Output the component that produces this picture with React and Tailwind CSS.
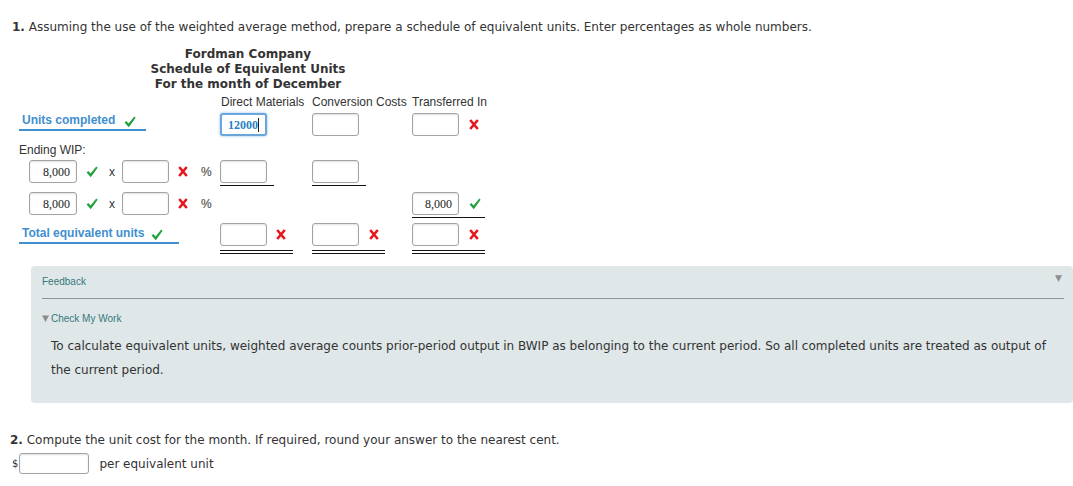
import React from 'react';

const body = { fontFamily: '"DejaVu Sans", Verdana, sans-serif' };
const arial = { fontFamily: '"Liberation Sans", Arial, sans-serif' };
const serif = { fontFamily: '"Liberation Serif", "Times New Roman", serif' };

const Check = ({ className = '' }) => (
  <svg width="12" height="12" viewBox="0 0 12 12" className={className}>
    <path d="M0.6 6.6 L2.3 5.1 L4.6 7.6 L10.3 0.6 L11.6 1.8 L4.8 11.2 Z" fill="#1fa03a" />
  </svg>
);

const Cross = ({ className = '' }) => (
  <svg width="10" height="11" viewBox="0 0 10 11" className={className}>
    <path d="M1.2 1 L8.8 10 M8.8 1 L1.2 10" stroke="#e8151c" strokeWidth="2.6" />
  </svg>
);

const Caret = ({ className = '' }) => (
  <svg width="7" height="7" viewBox="0 0 7 7" className={className}>
    <path d="M0 0.5 H7 L3.5 7 Z" fill="#8c8c8c" />
  </svg>
);

const Box = ({ value, focused, width = 'w-[47px]' }) => (
  <div
    className={`${width} h-[23px] bg-white rounded-[3px] flex items-center justify-end pr-[6px] text-[12px] ${
      focused
        ? 'border-2 border-[#6aa6dc] shadow-[0_0_3px_#8ec0ea] text-[#2a7fc4] font-bold'
        : 'border border-[#a3a3a3] shadow-[inset_0_1px_2px_rgba(0,0,0,0.12)] text-[#222]'
    }`}
    style={serif}
  >
    {value}
    {focused && <span className="w-px h-[14px] bg-[#222]"></span>}
  </div>
);

const BlueLabel = ({ text, width, gap }) => (
  <div
    className={`${width} h-[19px] border-b-2 border-[#3f8fd0] flex items-start pl-[3px] text-[12px] leading-[16px] font-bold text-[#3f8fd0]`}
    style={arial}
  >
    <span>{text}</span>
    <Check className={`${gap} mt-[4px]`} />
  </div>
);

export default function App() {
  return (
    <div className="w-[1073px] h-[486px] bg-white text-[#333] overflow-hidden" style={body}>
      {/* part 1 question */}
      <p className="pt-[19px] pl-[12px] text-[12px] leading-[16px]">
        <span className="font-bold">1.</span> Assuming the use of the weighted average method, prepare a schedule of
        equivalent units. Enter percentages as whole numbers.
      </p>

      {/* title */}
      <div className="w-[496px] mt-[12px] text-center font-bold text-[12px] leading-[15px] text-[#333]">
        <div>Fordman Company</div>
        <div>Schedule of Equivalent Units</div>
        <div>For the month of December</div>
      </div>

      {/* column headers */}
      <div className="flex ml-[221px] mt-[3px] text-[12px] leading-[14px] text-[#333]" style={arial}>
        <div className="w-[91px]">Direct Materials</div>
        <div className="w-[100px]">Conversion Costs</div>
        <div>Transferred In</div>
      </div>

      {/* units completed */}
      <div className="flex items-start h-[25px] mt-[2px]">
        <div className="w-[220px] pl-[19px] pt-[1px]">
          <BlueLabel text="Units completed" width="w-[127px]" gap="ml-[9px]" />
        </div>
        <div className="w-[92px] pt-[2px]">
          <Box value="12000" focused />
        </div>
        <div className="w-[100px] pt-[2px]">
          <Box />
        </div>
        <div className="pt-[2px] flex items-center h-[25px]">
          <Box />
          <Cross className="ml-[10px]" />
        </div>
      </div>

      {/* ending wip */}
      <div className="mt-[7px] pl-[19px] text-[12px] leading-[14px]" style={arial}>
        Ending WIP:
      </div>

      <div className="flex mt-[3px]">
        <div className="w-[220px] pl-[29px] flex items-center h-[23px] text-[12px]" style={arial}>
          <Box value="8,000" width="w-[48px]" />
          <Check className="ml-[9px]" />
          <span className="ml-[11px]">x</span>
          <div className="ml-[7px]">
            <Box width="w-[47px]" />
          </div>
          <Cross className="ml-[9px]" />
          <span className="ml-[13px]">%</span>
        </div>
        <div className="w-[92px]">
          <div className="w-[54px] pb-[2px] border-b border-[#111]">
            <Box />
          </div>
        </div>
        <div className="w-[100px]">
          <div className="w-[54px] pb-[2px] border-b border-[#111]">
            <Box />
          </div>
        </div>
      </div>

      <div className="flex mt-[6px]">
        <div className="w-[220px] pl-[29px] flex items-center h-[23px] text-[12px]" style={arial}>
          <Box value="8,000" width="w-[48px]" />
          <Check className="ml-[9px]" />
          <span className="ml-[11px]">x</span>
          <div className="ml-[7px]">
            <Box width="w-[47px]" />
          </div>
          <Cross className="ml-[9px]" />
          <span className="ml-[13px]">%</span>
        </div>
        <div className="w-[192px]"></div>
        <div className="w-[73px] pb-[2px] border-b border-[#111] flex items-center">
          <Box value="8,000" />
          <Check className="ml-[10px]" />
        </div>
      </div>

      {/* total */}
      <div className="flex items-start mt-[5px]">
        <div className="w-[220px] pl-[19px] pt-[2px]">
          <BlueLabel text="Total equivalent units" width="w-[160px]" gap="ml-[7px]" />
        </div>
        <div className="w-[92px]">
          <div className="w-[73px] pb-[4px] border-b-4 border-double border-[#111] flex items-center">
            <Box />
            <Cross className="ml-[9px]" />
          </div>
        </div>
        <div className="w-[100px]">
          <div className="w-[73px] pb-[4px] border-b-4 border-double border-[#111] flex items-center">
            <Box />
            <Cross className="ml-[10px]" />
          </div>
        </div>
        <div className="w-[73px] pb-[4px] border-b-4 border-double border-[#111] flex items-center">
          <Box />
          <Cross className="ml-[10px]" />
        </div>
      </div>

      {/* feedback */}
      <div className="ml-[31px] mt-[12px] h-[137px] bg-[#dfe7e9] rounded-[4px] pl-[11px] pr-[9px] pt-[10px]">
        <div className="flex justify-between items-start pb-[10px] border-b border-[#8c9597]">
          <span className="text-[10px] leading-[12px] text-[#36787c]" style={arial}>
            Feedback
          </span>
          <span className="text-[9px] leading-[9px] text-[#8f8f8f] mt-[-2px] mr-[2px]">▼</span>
        </div>
        <div className="mt-[14px] flex items-center text-[10px] leading-[12px] text-[#36787c]" style={arial}>
          <Caret className="mr-[2px] mt-[-1px]" />
          Check My Work
        </div>
        <p className="mt-[9px] ml-[9px] mr-[15px] text-[12px] leading-[24px] text-[#333]">
          To calculate equivalent units, weighted average counts prior-period output in BWIP as belonging to the
          current period. So all completed units are treated as output of the current period.
        </p>
      </div>

      {/* part 2 */}
      <p className="mt-[29px] pl-[10px] text-[12px] leading-[16px]">
        <span className="font-bold">2.</span> Compute the unit cost for the month. If required, round your answer to
        the nearest cent.
      </p>
      <div className="flex items-center mt-[5px] pl-[12px] text-[12px]">
        <span className="text-[10px]">$</span>
        <div className="ml-[1px] w-[70px] h-[21px] bg-white border border-[#a3a3a3] rounded-[3px] shadow-[inset_0_1px_2px_rgba(0,0,0,0.12)]"></div>
        <span className="ml-[10px]">per equivalent unit</span>
      </div>
    </div>
  );
}
